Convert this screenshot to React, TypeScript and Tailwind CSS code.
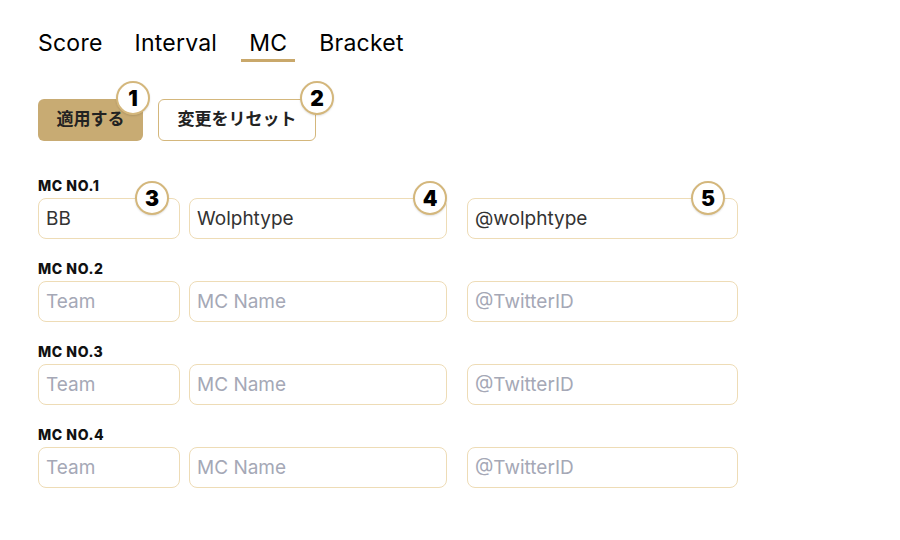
import { useState } from 'react';

const tabs = ['Score', 'Interval', 'MC', 'Bracket'];

function Badge({ n, className }: { n: number; className: string }) {
    return (
        <div
            className={`absolute flex h-[34px] w-[34px] items-center justify-center rounded-full border-2 border-[#d4b77c] bg-white text-[21px] font-black leading-none text-black shadow-[0_1px_2px_rgba(0,0,0,0.12)] ${className}`}
        >
            {n}
        </div>
    );
}

type McRow = { team: string; name: string; twitter: string };

const initialRows: McRow[] = [
    { team: 'BB', name: 'Wolphtype', twitter: '@wolphtype' },
    { team: '', name: '', twitter: '' },
    { team: '', name: '', twitter: '' },
    { team: '', name: '', twitter: '' },
];

const inputCls =
    'h-[41px] w-full rounded-lg border-[1.5px] border-[#eedcb6] bg-white px-[7px] text-[19px] text-[#333] outline-none placeholder:text-[#a5a8b6]';

export default function App() {
    const [active, setActive] = useState('MC');
    const [rows, setRows] = useState(initialRows);

    const update = (i: number, key: keyof McRow, v: string) => {
        setRows(rows.map((r, idx) => (idx === i ? { ...r, [key]: v } : r)));
    };

    return (
        <div className="h-[540px] w-[900px] bg-white pl-[30px] pt-[28px] font-['Inter','Noto_Sans_CJK_JP',sans-serif] text-black">
            <div className="flex gap-[16px]">
                {tabs.map((t) => (
                    <button
                        key={t}
                        onClick={() => setActive(t)}
                        className={`border-b-[3px] px-2 pb-[1px] text-[23px] leading-[30px] tracking-[0.01em] ${active === t ? 'border-[#c9a86b]' : 'border-transparent'}`}
                    >
                        {t}
                    </button>
                ))}
            </div>

            <div className="mt-[37px] flex gap-[15px] pl-2">
                <div className="relative">
                    <button className="h-[42px] w-[105px] rounded-md bg-[#c8ab73] text-[17px] font-bold text-[#222]">
                        適用する
                    </button>
                    <Badge n={1} className="-right-[7px] -top-[18px]" />
                </div>
                <div className="relative">
                    <button className="h-[42px] w-[158px] rounded-md border-[1.5px] border-[#d4b77c] bg-white text-[17px] font-bold text-[#222]">
                        変更をリセット
                    </button>
                    <Badge n={2} className="-right-[18px] -top-[18px]" />
                </div>
            </div>

            <div className="mt-[37px] flex flex-col gap-[22px] pl-2">
                {rows.map((r, i) => (
                    <div key={i} className="flex flex-col gap-[4px]">
                        <div className="text-[14px] font-extrabold leading-4 tracking-[0.04em] text-[#111]">MC NO.{i + 1}</div>
                        <div className="flex">
                            <div className="relative w-[142px]">
                                <input className={inputCls} placeholder="Team" value={r.team} onChange={(e) => update(i, 'team', e.target.value)} />
                                {i === 0 && <Badge n={3} className="right-[11px] -top-[17px]" />}
                            </div>
                            <div className="relative ml-[9px] w-[258px]">
                                <input className={inputCls} placeholder="MC Name" value={r.name} onChange={(e) => update(i, 'name', e.target.value)} />
                                {i === 0 && <Badge n={4} className="right-0 -top-[17px]" />}
                            </div>
                            <div className="relative ml-[20px] w-[271px]">
                                <input className={inputCls} placeholder="@TwitterID" value={r.twitter} onChange={(e) => update(i, 'twitter', e.target.value)} />
                                {i === 0 && <Badge n={5} className="right-[13px] -top-[17px]" />}
                            </div>
                        </div>
                    </div>
                ))}
            </div>
        </div>
    );
}
